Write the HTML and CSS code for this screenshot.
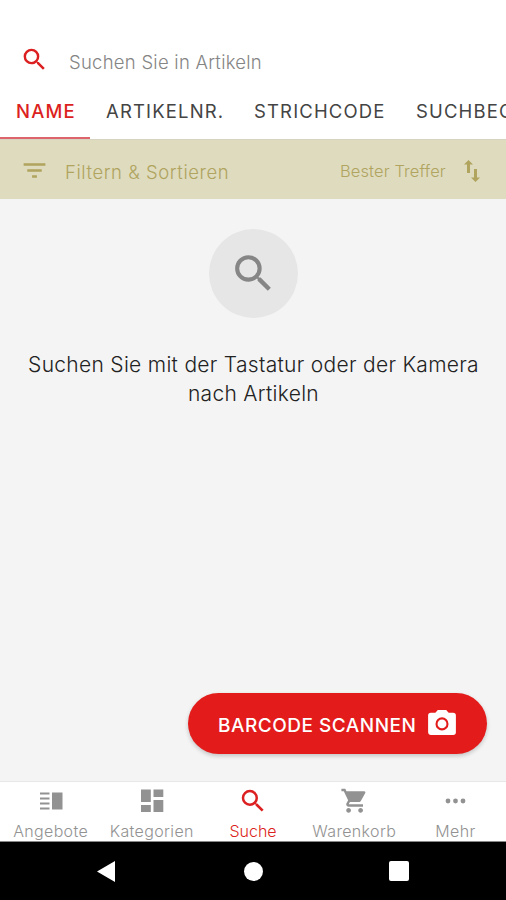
FILE: index.html
```html
<!DOCTYPE html>
<html lang="de">
<head>
<meta charset="utf-8">
<title>Suche</title>
<link rel="stylesheet" href="styles.css">
</head>
<body>
<div class="app">
  <header class="search">
    <svg class="icon" viewBox="0 0 24 24"><path d="M15.5 14h-.79l-.28-.27A6.47 6.47 0 0 0 16 9.5 6.5 6.5 0 1 0 9.5 16c1.61 0 3.09-.59 4.23-1.57l.27.28v.79l5 4.99L20.49 19l-4.99-5zm-6 0a4.5 4.5 0 1 1 0-9 4.5 4.5 0 0 1 0 9z"/></svg>
    <span class="placeholder">Suchen Sie in Artikeln</span>
  </header>
  <nav class="tabs">
    <span class="tab tab-name active">NAME</span>
    <span class="tab tab-number">ARTIKELNR.</span>
    <span class="tab tab-code">STRICHCODE</span>
    <span class="tab tab-term">SUCHBEGRIFF</span>
  </nav>
  <section class="filter">
    <svg class="icon" viewBox="0 0 24 24"><path d="M10 18h4v-2h-4v2zM3 6v2h18V6H3zm3 7h12v-2H6v2z"/></svg>
    <span class="filter-label">Filtern &amp; Sortieren</span>
    <span class="sort-label">Bester Treffer</span>
    <svg class="swap" viewBox="0 0 16 22"><path d="M4.500 0 0 4.600h3V13h3V4.600h3zM10 9v8.400H7L11.500 22 16 17.400h-3V9z"/></svg>
  </section>
  <main class="content">
    <div class="circle">
      <svg viewBox="0 0 24 24"><path d="M15.5 14h-.79l-.28-.27A6.47 6.47 0 0 0 16 9.5 6.5 6.5 0 1 0 9.5 16c1.61 0 3.09-.59 4.23-1.57l.27.28v.79l5 4.99L20.49 19l-4.99-5zm-6 0a4.5 4.5 0 1 1 0-9 4.5 4.5 0 0 1 0 9z"/></svg>
    </div>
    <p class="hint"><span class="line-one">Suchen Sie mit der Tastatur oder der Kamera</span><br><span class="line-two">nach Artikeln</span></p>
    <button class="scan">
      <span class="scan-label">BARCODE SCANNEN</span>
      <svg viewBox="0 0 20 18"><path fill-rule="evenodd" d="M7 0 5.200 2H2a2 2 0 0 0-2 2v12c0 1.100.9 2 2 2h16a2 2 0 0 0 2-2V4a2 2 0 0 0-2-2h-3.200L13 0zm3 5.300a4.700 4.700 0 1 1 0 9.400 4.700 4.700 0 0 1 0-9.400z"/><circle cx="10" cy="10" r="3.2"/></svg>
    </button>
  </main>
  <nav class="bottom">
    <div class="item"><svg viewBox="0 0 24 24"><path d="M13 3.500h10.500v17H13zM1 3.500h9.500v2H1zm0 5h9.500v2H1zm0 5h9.500v2H1zm0 5h9.500v2H1z"/></svg><span class="label-offers">Angebote</span></div>
    <div class="item"><svg viewBox="0 0 24 24"><path d="M1 .500h9.800V13H1zm0 15.500h9.800v7H1zM13.500 .500h9.800V8h-9.800zm0 10.500h9.800v12h-9.800z"/></svg><span class="label-categories">Kategorien</span></div>
    <div class="item current"><svg viewBox="2.400 2.400 19.200 19.200"><path d="M15.5 14h-.79l-.28-.27A6.47 6.47 0 0 0 16 9.5 6.5 6.5 0 1 0 9.5 16c1.61 0 3.09-.59 4.23-1.57l.27.28v.79l5 4.99L20.49 19l-4.99-5zm-6 0a4.5 4.5 0 1 1 0-9 4.5 4.5 0 0 1 0 9z"/></svg><span class="label-search">Suche</span></div>
    <div class="item"><svg viewBox="1.500 2.200 20 20"><path d="M7 18c-1.100 0-1.990.9-1.990 2S5.900 22 7 22s2-.9 2-2-.9-2-2-2zM1 2v2h2l3.600 7.590-1.350 2.450c-.16.280-.25.610-.25.960 0 1.100.9 2 2 2h12v-2H7.420c-.14 0-.25-.11-.25-.25l.03-.12.900-1.630h7.450c.75 0 1.410-.41 1.750-1.030l3.580-6.490A1 1 0 0 0 20 4H5.210l-.94-2zm16 16c-1.100 0-1.990.9-1.990 2s.89 2 1.990 2 2-.9 2-2-.9-2-2-2z"/></svg><span class="label-cart">Warenkorb</span></div>
    <div class="item"><svg viewBox="0 0 24 24"><circle cx="5" cy="12" r="2.400"/><circle cx="12.500" cy="12" r="2.400"/><circle cx="20" cy="12" r="2.400"/></svg><span class="label-more">Mehr</span></div>
  </nav>
  <footer class="system">
    <svg class="back" viewBox="0 0 18 21"><path d="M18 0v21L0 10.500z"/></svg>
    <span class="home"></span>
    <span class="recent"></span>
  </footer>
</div>
</body>
</html>
```

FILE: styles.css
```css
* { box-sizing: border-box; }
body { margin: 0; font-family: Inter, "Liberation Sans", sans-serif; background: #fff; }
svg { display: block; flex: none; fill: currentColor; overflow: visible; }
.app { width: 506px; height: 900px; display: flex; flex-direction: column; overflow: hidden; }
.icon { width: 29px; height: 29px; }

.search { height: 82px; padding: 37px 0 0 20px; display: flex; color: #dc1f20; }
.search .icon { margin-top: 8px; }
.placeholder { margin-left: 20px; font-size: 18.500px; font-weight: 300; line-height: 51px; color: #858585; letter-spacing: .25px; white-space: nowrap; }

.tabs { height: 57px; display: flex; overflow: hidden; color: #444; }
.tab { flex: none; padding-left: 16px; font-size: 18.500px; font-weight: 400; line-height: 59px; letter-spacing: 1.150px; white-space: nowrap; }
.tab-name { width: 90px; }
.tab-number { width: 148px; }
.tab-code { width: 162px; }
.tab.active { color: #dc1f20; font-weight: 500; border-bottom: 2px solid #dd646c; }

.filter { height: 60px; padding: 0 26px 0 20px; display: flex; align-items: center; background: #dedbbf; color: #b0a45e; border-top: 1px solid #d6d4bf; }
.filter .icon { margin-top: 1px; }
.filter-label { margin-left: 16px; padding-top: 5px; font-size: 18.500px; font-weight: 300; letter-spacing: .550px; white-space: nowrap; }
.sort-label { margin-left: auto; width: 107px; padding-top: 3px; font-size: 16.500px; font-weight: 300; letter-spacing: .1px; white-space: nowrap; }
.swap { width: 16px; height: 22px; margin: 2px 0 0 17px; }

.content { flex: 1; display: flex; flex-direction: column; align-items: center; padding: 30px 19px 27px; background: #f4f4f4; }
.circle { width: 89px; height: 89px; border-radius: 50%; background: #e6e6e6; color: #868686; display: flex; align-items: center; justify-content: center; }
.circle svg { width: 49px; height: 49px; }
.hint { margin: 33px -10px 0 -9px; font-size: 21px; font-weight: 300; line-height: 28.500px; letter-spacing: .3px; text-align: center; color: #222; white-space: nowrap; }
.scan { width: 299px; height: 61px; margin-top: auto; align-self: flex-end; padding: 0 31px 0 30px; display: flex; align-items: center; justify-content: space-between; border: 0; border-radius: 31px; background: #e31c1b; color: #fff; font-family: inherit; box-shadow: 0 2px 4px #0003; }
.scan-label { padding-top: 3px; font-size: 19px; font-weight: 500; letter-spacing: .5px; white-space: nowrap; }
.scan svg { width: 28px; height: 25px; margin-top: -2px; }

.bottom { height: 61px; display: grid; grid-template-columns: repeat(5, 1fr); border-top: 1px solid #e7e7e7; border-bottom: 1px solid #888; background: #fff; color: #929292; }
.item { display: flex; flex-direction: column; align-items: center; padding-top: 7px; white-space: nowrap; }
.item svg { width: 24px; height: 24px; }
.item span { margin-top: 8px; font-size: 16px; font-weight: 300; line-height: 20px; letter-spacing: .350px; }
.item .label-search { letter-spacing: 0; }
.item.current { color: #dc1f20; }

.system { height: 58px; display: flex; align-items: center; padding-left: 97px; background: #000; color: #fff; }
.home { width: 19px; height: 19px; margin-left: 129px; border-radius: 50%; background: #fff; }
.recent { width: 20px; height: 20px; margin-left: 126px; border-radius: 2px; background: #fff; }
.back { width: 18px; height: 21px; }
```
